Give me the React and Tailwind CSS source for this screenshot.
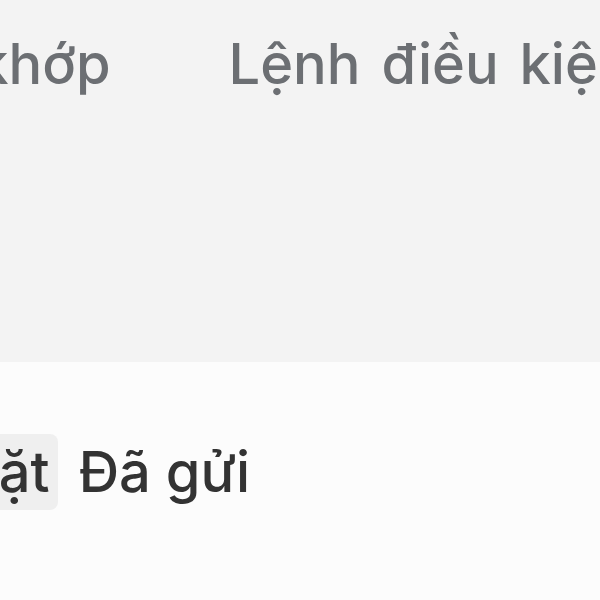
export default function App() {
  return (
    <div
      className="flex h-[600px] w-[600px] flex-col overflow-hidden bg-[#fcfcfc]"
      style={{ fontFamily: 'Inter, "Noto Sans", sans-serif' }}
    >
      <div className="flex h-[362px] shrink-0 flex-col bg-[#f3f3f3]">
        <div className="-ml-[263px] flex items-center gap-[118px] whitespace-nowrap pt-[26px] text-[56px] font-medium leading-[76px] text-[#6c6f73] [word-spacing:6px]">
          <span>Lệnh đã khớp</span>
          <span>Lệnh điều kiện</span>
        </div>
      </div>
      <div className="-ml-[131px] flex items-center gap-[21px] whitespace-nowrap pt-[72px] text-[56px] font-medium leading-[76px] text-[#333333]">
        <span className="rounded-[8px] bg-[#efefef] px-[8px]">Đã đặt</span>
        <span>Đã gửi</span>
      </div>
    </div>
  )
}
